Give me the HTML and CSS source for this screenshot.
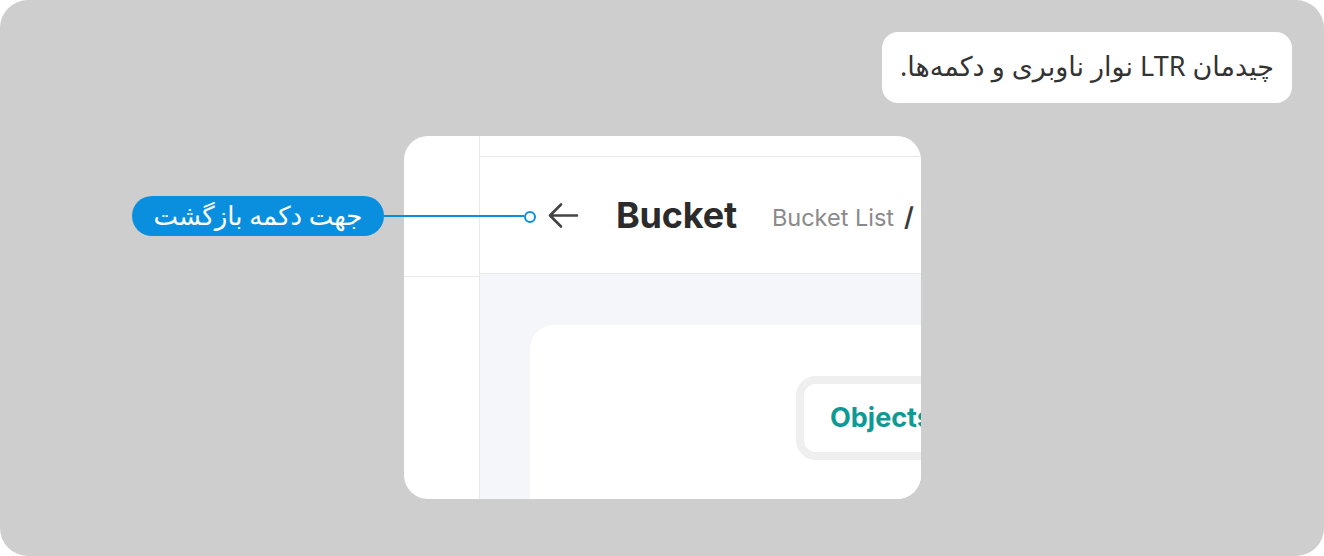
FILE: index.html
```html
<!DOCTYPE html>
<html lang="fa">
<head>
<meta charset="utf-8">
<link rel="stylesheet" href="styles.css">
</head>
<body>
<div class="frame">
  <div class="note" dir="rtl">چیدمان LTR نوار ناوبری و دکمه‌ها.</div>

  <div class="card">
    <div class="sidebar">
      <div class="side-top"></div>
      <div class="side-rest"></div>
    </div>
    <div class="main">
      <div class="strip"></div>
      <div class="header">
        <svg class="back" width="34" height="30" viewBox="0 0 34 30">
          <path d="M31 14.5H4.5M15 3.5L4 14.5L15 25.5" fill="none" stroke="#444" stroke-width="2.6" stroke-linecap="round" stroke-linejoin="round"/>
        </svg>
        <span class="title">Bucket</span>
        <span class="crumb">Bucket List</span>
        <span class="slash">/</span>
      </div>
      <div class="content">
        <div class="panel">
          <div class="tab">Objects</div>
        </div>
      </div>
    </div>
  </div>

  <div class="callout">
    <div class="pill" dir="rtl">جهت دکمه بازگشت</div>
    <div class="wire"></div>
    <div class="dot"></div>
  </div>
</div>
</body>
</html>
```

FILE: styles.css
```css
html, body {
  margin: 0;
  padding: 0;
  background: #ffffff;
}
.frame {
  position: relative;
  width: 1324px;
  height: 556px;
  background: #cecece;
  border-radius: 28px;
  overflow: hidden;
  font-family: "Noto Sans", "DejaVu Sans", sans-serif;
}
.note {
  position: absolute;
  left: 882px;
  top: 32px;
  width: 410px;
  height: 71px;
  box-sizing: border-box;
  background: #fff;
  border-radius: 16px;
  display: flex;
  align-items: center;
  justify-content: center;
  font-size: 27px;
  color: #333;
  padding-bottom: 4px;
}
.card {
  position: absolute;
  left: 404px;
  top: 136px;
  width: 517px;
  height: 363px;
  background: #fff;
  border-radius: 24px;
  overflow: hidden;
  display: flex;
}
.sidebar {
  width: 75px;
  flex: none;
  border-right: 1px solid #e9e9ec;
  display: flex;
  flex-direction: column;
}
.side-top {
  height: 140px;
  border-bottom: 1px solid #e9e9ec;
}
.side-rest { flex: 1; }
.main {
  flex: 1;
  display: flex;
  flex-direction: column;
  min-width: 0;
}
.strip {
  height: 20px;
  border-bottom: 1px solid #e9e9ec;
}
.header {
  height: 116px;
  border-bottom: 1px solid #e9e9ec;
  display: flex;
  align-items: center;
  padding-left: 66px;
  white-space: nowrap;
  font-family: Inter, "Liberation Sans", sans-serif;
}
.back {
  flex: none;
  margin-right: 36px;
  margin-top: 2px;
}
.title {
  font-size: 36px;
  font-weight: 700;
  color: #2b2b2b;
  letter-spacing: -0.2px;
}
.crumb {
  margin-left: 35px;
  font-size: 23.5px;
  color: #8a8a8a;
  margin-top: 4px;
}
.slash {
  margin-left: 10px;
  font-size: 26px;
  font-weight: 600;
  color: #3a3a3a;
  margin-top: 2px;
}
.content {
  flex: 1;
  background: #f5f6fa;
  padding: 51px 0 0 50px;
  display: flex;
}
.panel {
  flex: 1;
  background: #fff;
  border-radius: 24px 0 0 0;
  padding: 51px 0 0 266px;
}
.tab {
  display: inline-block;
  border: 8px solid #efefef;
  border-radius: 20px;
  height: 68px;
  line-height: 68px;
  padding: 0 26px;
  font-family: Inter, "Liberation Sans", sans-serif;
  font-size: 27px;
  font-weight: 700;
  color: #0e9a94;
  white-space: nowrap;
}
.callout {
  position: absolute;
  left: 132px;
  top: 196px;
  display: flex;
  align-items: center;
}
.pill {
  width: 252px;
  height: 40px;
  box-sizing: border-box;
  background: #0a8fdf;
  border-radius: 20px;
  color: #fff;
  font-size: 26px;
  padding-bottom: 3px;
  display: flex;
  align-items: center;
  justify-content: center;
}
.wire {
  width: 140px;
  height: 2px;
  background: #0a8fdf;
  margin-top: -1px;
}
.dot {
  width: 8px;
  height: 8px;
  border: 2px solid #0a8fdf;
  border-radius: 50%;
  background: #fff;
  margin-top: 1px;
}
```
